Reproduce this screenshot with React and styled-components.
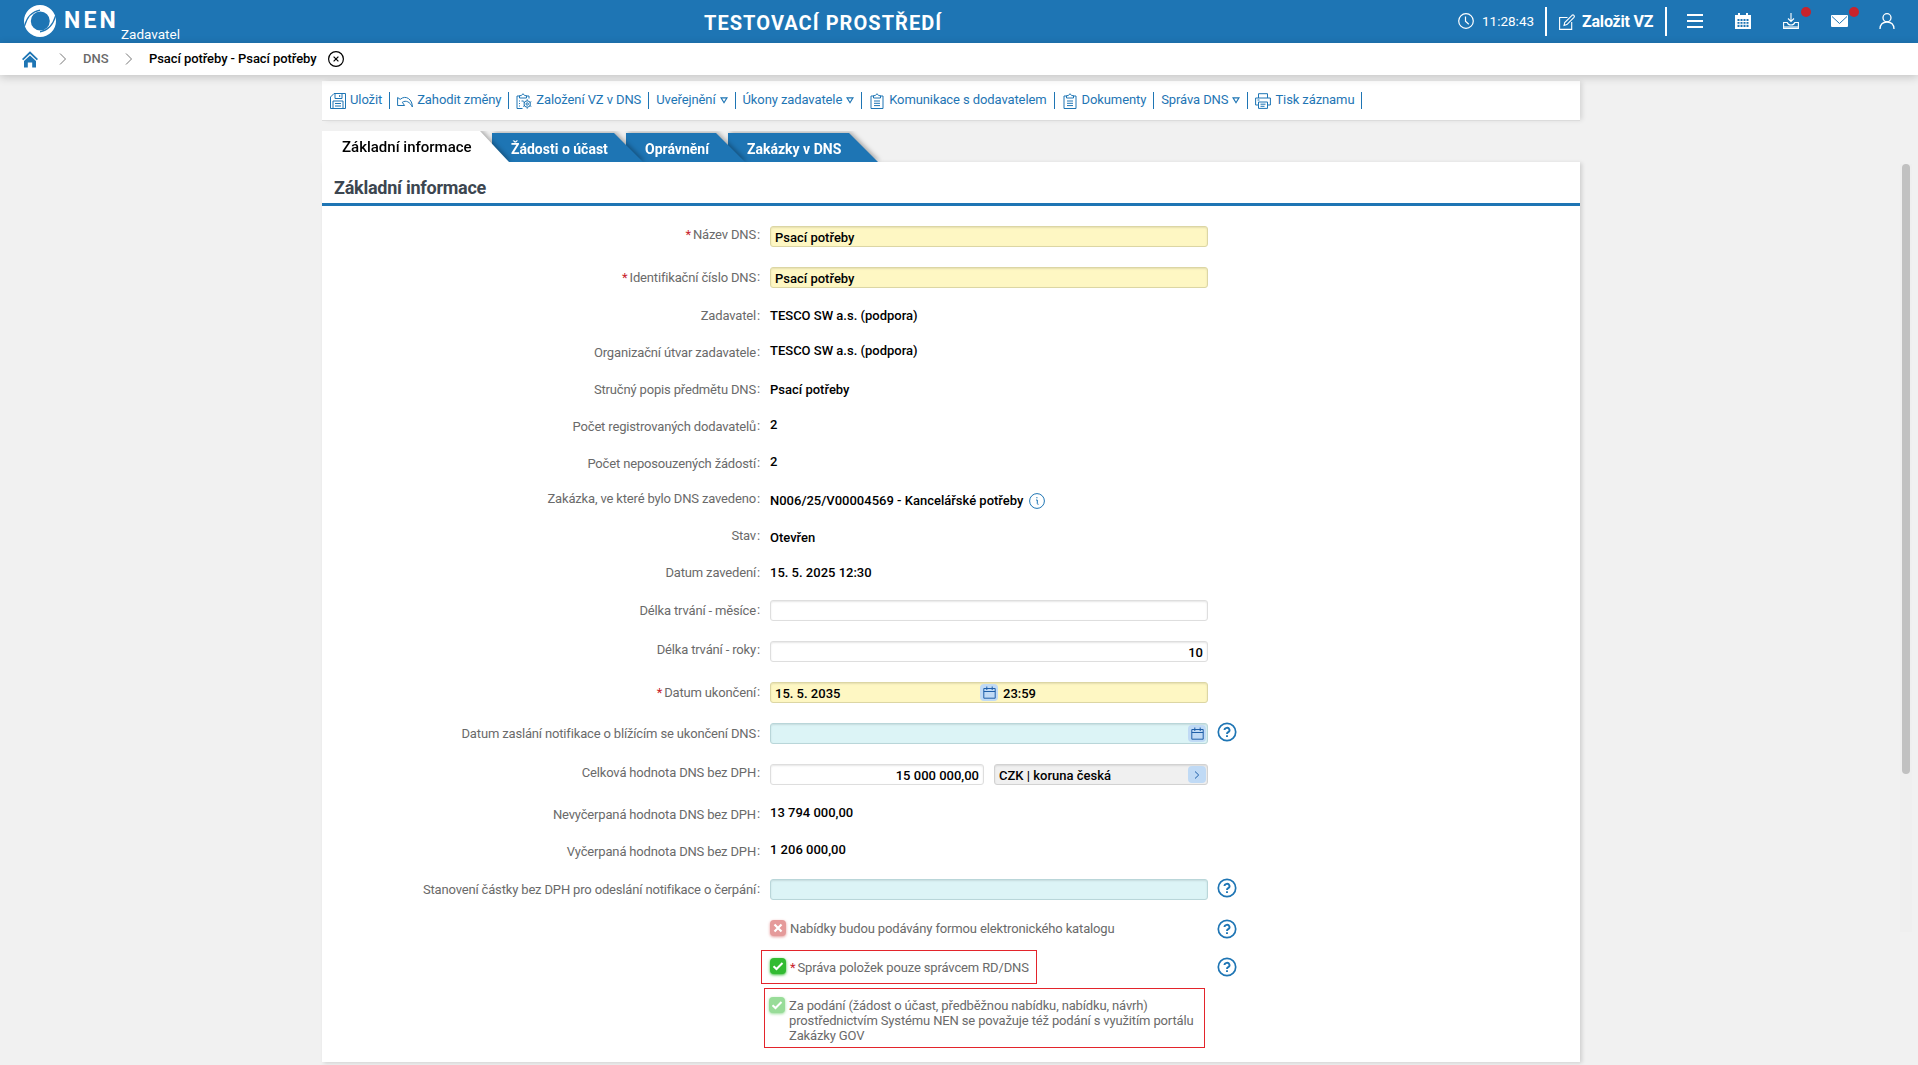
import React from 'react';
import styled, { createGlobalStyle } from 'styled-components';

const colors = {
    blue: '#1e75b4',
    page: '#f1f1f1',
    label: '#6a6a6a',
    red: '#c8232c',
    frame: '#e3242b',
}

const fieldColors = {
    required: { bg: '#fef7c3', line: '#dcd6a4' },
    notify: { bg: '#dcf4f6', line: '#b9d6d9' },
    plain: { bg: '#ffffff', line: '#dedede' },
    locked: { bg: '#f0f0f0', line: '#d2d2d2' },
}

// h = row height, l / v = top offset of the label and of the value
const rows = [
    { label: 'Název DNS', h: 41, l: 1, v: 2, required: true, kind: 'input', tone: 'required', value: 'Psací potřeby' },
    { label: 'Identifikační číslo DNS', h: 39, l: 3, v: 2, raised: true, required: true, kind: 'input', tone: 'required', value: 'Psací potřeby' },
    { label: 'Zadavatel', h: 37, l: 2, v: 2, value: 'TESCO SW a.s. (podpora)' },
    { label: 'Organizační útvar zadavatele', h: 37, l: 2, v: 0, raised: true, value: 'TESCO SW a.s. (podpora)' },
    { label: 'Stručný popis předmětu DNS', h: 37, l: 2, v: 2, raised: true, value: 'Psací potřeby' },
    { label: 'Počet registrovaných dodavatelů', h: 37, l: 2, v: 0, raised: true, value: '2' },
    { label: 'Počet neposouzených žádostí', h: 37, l: 2, v: 0, raised: true, value: '2' },
    { label: 'Zakázka, ve které bylo DNS zavedeno', h: 37, l: 0, v: 2, info: true, value: 'N006/25/V00004569 - Kancelářské potřeby' },
    { label: 'Stav', h: 37, l: 0, v: 2, value: 'Otevřen' },
    { label: 'Datum zavedení', h: 35, l: 0, v: 0, value: '15. 5. 2025 12:30' },
    { label: 'Délka trvání - měsíce', h: 41, l: 3, v: 2, raised: true, kind: 'input', tone: 'plain', value: '' },
    { label: 'Délka trvání - roky', h: 41, l: 1, v: 2, kind: 'input', tone: 'plain', align: 'right', value: '10' },
    { label: 'Datum ukončení', h: 41, l: 3, v: 2, raised: true, required: true, kind: 'datetime', tone: 'required', value: '15. 5. 2035', time: '23:59' },
    { label: 'Datum zaslání notifikace o blížícím se ukončení DNS', h: 41, l: 3, v: 2, raised: true, kind: 'date', tone: 'notify', help: true, value: '' },
    { label: 'Celková hodnota DNS bez DPH', h: 41, l: 1, v: 2, kind: 'money', tone: 'plain', value: '15 000 000,00', currency: 'CZK | koruna česká' },
    { label: 'Nevyčerpaná hodnota DNS bez DPH', h: 37, l: 2, v: 0, raised: true, value: '13 794 000,00' },
    { label: 'Vyčerpaná hodnota DNS bez DPH', h: 37, l: 2, v: 0, raised: true, value: '1 206 000,00' },
    { label: 'Stanovení částky bez DPH pro odeslání notifikace o čerpání', h: 41, l: 3, v: 2, raised: true, kind: 'input', tone: 'notify', help: true, value: '' },
]

const actions = [
    { text: 'Uložit', icon: 'save' },
    { text: 'Zahodit změny', icon: 'undo' },
    { text: 'Založení VZ v DNS', icon: 'clipGear' },
    { text: 'Uveřejnění', menu: true },
    { text: 'Úkony zadavatele', menu: true },
    { text: 'Komunikace s dodavatelem', icon: 'clip' },
    { text: 'Dokumenty', icon: 'clip' },
    { text: 'Správa DNS', menu: true },
    { text: 'Tisk záznamu', icon: 'print' },
]

const tabs = [
    { text: 'Žádosti o účast', width: 134 },
    { text: 'Oprávnění', width: 102 },
    { text: 'Zakázky v DNS', width: 133 },
]

const GlobalStyle = createGlobalStyle`
    * { box-sizing: border-box; }

    body {
        margin: 0;
        height: 1065px;
        overflow: hidden;
        background: ${colors.page};
        font-family: Roboto, sans-serif;
        font-size: 13px;
        color: #000;
    }

    svg { display: block; flex: none; }
`

/* ---------- icons ---------- */

const Stroke = ({ size = 16, w = 1, children, box = 16 }) => (
    <svg width={size} height={size} viewBox={`0 0 ${box} ${box}`} fill="none" stroke="currentColor" strokeWidth={w}>
        {children}
    </svg>
)

const LogoMark = () => (
    <svg width="32" height="32" viewBox="0 0 32 32">
        <path fill="#fff" fillRule="evenodd" d="M16 0a16 16 0 1 0 0 32a16 16 0 1 0 0-32zM16.300 6.500a9.500 9.500 0 1 1 0 19a9.500 9.500 0 1 1 0-19z" />
        <path fill="none" stroke={colors.blue} strokeWidth="1.2" d="M.5 21C3 12 8 6.500 16 5.200M31.500 11C29 20 24 25.500 16 26.800" />
    </svg>
)

const HomeIcon = () => (
    <svg width="16" height="17" viewBox="0 0 16 17">
        <path fill="none" stroke={colors.blue} strokeWidth="1.800" d="M.6 8.600L8 1.500L15.400 8.600" />
        <path fill={colors.blue} d="M8 4.400L14 10V16.500H10.200V11.500H5.800V16.500H2V10Z" />
    </svg>
)

const ClipBody = () => (
    <>
        <path d="M4.500 3H2v12.500h12V3h-2.500" />
        <path d="M4.500 5V2.600h1.800L8 .7l1.700 1.900h1.800V5z" />
    </>
)

const icons = {
    save: (
        <Stroke>
            <path d="M4 .5h11.500v15H.5V4zM5 .8v4.700h7V.8M9.700 2v2M3 15.300V8h10v7.300M5 10.500h6M5 13h6" />
        </Stroke>
    ),
    undo: (
        <Stroke>
            <path d="M.6 4.500v8h7L5.300 9.300C9 6.800 13 9 15.400 14C15.400 6.500 9 1.500 3.200 6.300z" />
        </Stroke>
    ),
    clip: (
        <Stroke>
            <ClipBody />
            <path d="M5 8h6M5 10.300h6M5 12.600h6" />
        </Stroke>
    ),
    clipGear: (
        <Stroke>
            <path d="M3.500 3H1v12.500h5.500M10.500 3H13v2.500M3.500 5V2.600h1.800L7 .7l1.700 1.900h1.800V5z" />
            <path d="M3 8h1M5.500 8h2M3 10.500h1M3 13h1" />
            <circle cx="11.200" cy="11" r="3.200" />
            <circle cx="11.200" cy="11" r="1.200" />
            <path d="M11.200 6.300v1.500M11.200 14.200v1.500M7.100 8.700l1.400.8M13.900 12.600l1.400.8M7.100 13.400l1.400-.8M13.900 9.500l1.400-.8" />
        </Stroke>
    ),
    print: (
        <Stroke>
            <path d="M3.500 5V.7h9V5M3.500 12H.6V5h14.800v7h-2.900M3.500 9h9v6.400h-9zM5.500 11.200h5M5.500 13.300h4M2.500 7h2" />
        </Stroke>
    ),
}

const CalendarIcon = () => (
    <Stroke size={13} box={13} w={1}>
        <path d="M.8 2.500h11.400v9.700H.8zM.8 5.500h11.400M3.800 .5v3.500M9.200 .5v3.500" />
    </Stroke>
)

const HelpIcon = () => (
    <svg width="20" height="20" viewBox="0 0 20 20" fill="none" stroke={colors.blue}>
        <circle cx="10" cy="10" r="8.700" strokeWidth="1.700" />
        <path d="M7.500 8.100a2.500 2.300 0 1 1 3.700 2C10.200 10.600 10 11 10 12" strokeWidth="1.900" />
        <path d="M10 13.200v1.900" strokeWidth="1.900" />
    </svg>
)

/* ---------- page header ---------- */

const Header = styled.header`
    height: 43px;
    background: ${colors.blue};
    color: #fff;
    display: grid;
    grid-template-columns: 704px 1fr auto;
`

const Brand = styled.div`
    display: flex;
    align-items: flex-start;
    padding: 5px 0 0 24px;
`

const BrandName = styled.span`
    margin-left: 8px;
    font-size: 23px;
    line-height: 32px;
    font-weight: 700;
    letter-spacing: 3.2px;
`

const BrandRole = styled.span`
    margin: 21px 0 0 2px;
    font-size: 13.5px;
    line-height: 16px;
`

const Environment = styled.div`
    font-size: 20px;
    font-weight: 700;
    line-height: 46px;
    letter-spacing: 1.05px;
`

const HeaderTools = styled.div`
    display: flex;
    align-items: center;
    padding-right: 23px;
    height: 42px;
`

const Clock = styled.div`
    display: flex;
    align-items: center;
    gap: 8px;
    width: 87px;
    font-size: 13.5px;
`

const NewTender = styled.div`
    display: flex;
    align-items: center;
    gap: 7px;
    width: 122px;
    height: 29px;
    margin-top: 1px;
    padding-left: 12px;
    border-left: 2px solid #fff;
    border-right: 2px solid #fff;
    font-size: 16px;
    font-weight: 700;
    letter-spacing: -0.2px;
    white-space: nowrap;
`

const HeaderIcons = styled.div`
    display: flex;
    align-items: center;
    gap: 32px;
    margin-left: 20px;
`

const HeaderIcon = styled.div`
    position: relative;
    width: 16px;
    height: 16px;
`

const Dot = styled.i`
    position: absolute;
    right: -12px;
    top: -6px;
    width: 10px;
    height: 10px;
    border-radius: 50%;
    background: ${colors.red};
`

const Breadcrumbs = styled.nav`
    position: relative;
    z-index: 2;
    height: 32px;
    display: flex;
    align-items: center;
    padding-left: 22px;
    background: #fff;
    box-shadow: 0 2px 10px rgba(0, 0, 0, 0.2);
    font-weight: 500;
`

const Crumb = styled.span`
    color: ${props => (props.$current ? '#000' : colors.label)};
    width: ${props => props.$width}px;
    line-height: 32px;
    letter-spacing: ${props => (props.$current ? '-0.08px' : '0')};
`

const Chevron = styled.span`
    width: 8px;
    margin: 0 ${props => props.$after}px 0 ${props => props.$before}px;
    color: #777;
`

/* ---------- toolbar and tabs ---------- */

const Content = styled.main`
    width: 1258px;
    margin: 6px 0 0 322px;
`

const Toolbar = styled.div`
    height: 40px;
    display: flex;
    padding: 11px 0 0 1px;
    background: #fff;
    border-bottom: 1px solid #dcdcdc;
    box-shadow: 3px 0 5px -1px rgba(0, 0, 0, 0.12);
    color: ${colors.blue};
    letter-spacing: -0.1px;
`

const Action = styled.div`
    display: flex;
    align-items: flex-start;
    height: 17px;
    padding: 0 7px;
    border-right: 1px solid ${colors.blue};
    line-height: 15px;
    white-space: nowrap;

    svg { margin: 1px 4px 0 0; }
`

const MenuMark = styled.span`
    margin: 5px 0 0 4px;

    svg { margin: 0; }
`

const Tabs = styled.div`
    display: flex;
    align-items: flex-end;
    height: 31px;
    margin-top: 10px;
    padding-right: 100px;
    overflow: hidden;
`

const TabWrap = styled.div`
    position: relative;
    z-index: ${props => props.$order};
    width: ${props => props.$width}px;
    flex: none;
    filter: drop-shadow(2px -1px 2px rgba(0, 0, 0, 0.28));
`

const TabShape = styled.div`
    width: ${props => props.$width + 17}px;
    height: ${props => (props.$active ? 31 : 29)}px;
    padding-left: ${props => (props.$active ? 20 : 19)}px;
    clip-path: polygon(0 0, calc(100% - 29px) 0, 100% 100%, 0 100%);
    background: ${props => (props.$active ? '#fff' : colors.blue)};
    color: ${props => (props.$active ? '#000' : '#fff')};
    font-size: ${props => (props.$active ? 15 : 14)}px;
    font-weight: ${props => (props.$active ? 500 : 700)};
    line-height: 32px;
    white-space: nowrap;
`

const Panel = styled.section`
    height: 900px;
    background: #fff;
    box-shadow: 2px 1px 4px rgba(0, 0, 0, 0.14);
`

const PanelTitle = styled.h1`
    margin: 0;
    height: 44px;
    padding-left: 12px;
    border-bottom: 3px solid ${colors.blue};
    color: #3c4650;
    font-size: 18px;
    font-weight: 700;
    line-height: 51px;
    letter-spacing: -0.25px;
`

/* ---------- form ---------- */

const Form = styled.div`
    padding-top: 18px;
`

const Row = styled.div`
    display: grid;
    grid-template-columns: 438px 438px 20px;
    column-gap: 10px;
    height: ${props => props.$h}px;
    line-height: 20px;
    white-space: nowrap;
`

const Label = styled.label`
    padding-top: ${props => props.$top}px;
    text-align: right;
    color: ${colors.label};
    letter-spacing: -0.16px;
`

const Star = styled.span`
    margin-right: 2px;
    color: ${colors.red};
`

const Colon = styled.span`
    position: relative;
    top: ${props => (props.$raised ? -1 : 0)}px;
    margin-left: 1px;
`

const Value = styled.div`
    display: flex;
    align-items: flex-start;
    gap: ${props => props.$gap || 5}px;
    padding-top: ${props => props.$top}px;
    font-weight: 500;
`

const Field = styled.div`
    flex: 1;
    display: flex;
    align-items: center;
    justify-content: ${props => (props.$align === 'right' ? 'flex-end' : 'flex-start')};
    height: 21px;
    padding: 2px 4px 0;
    border: 1px solid ${props => fieldColors[props.$tone].line};
    border-radius: 3px;
    background: ${props => fieldColors[props.$tone].bg};
    box-shadow: inset 0 1px 2px rgba(0, 0, 0, 0.1);
`

const FieldText = styled.span`
    width: ${props => (props.$width ? props.$width + 'px' : 'auto')};
`

const FieldButton = styled.span`
    display: flex;
    align-items: center;
    justify-content: center;
    width: 18px;
    height: 17px;
    margin: -2px ${props => (props.$end ? '-3px' : '5px')} 0 ${props => (props.$end ? 'auto' : '0')};
    border-radius: 4px;
    background: #c0daf5;
    color: #1f5fa8;
`

const InfoMark = styled.span`
    margin-top: 2px;
    color: ${colors.blue};
`

const Help = styled.div`
    margin-left: -1px;
    padding-top: ${props => props.$top}px;
`

const CheckRow = styled.div`
    display: grid;
    grid-template-columns: 448px 438px 30px;
    height: ${props => props.$h}px;
    white-space: nowrap;
`

const CheckCell = styled.div`
    grid-column: 2;
    padding: 2px 0 0;
`

const CheckLine = styled.div`
    display: flex;
    gap: 4px;
    color: ${colors.label};
    line-height: 15px;
    letter-spacing: -0.14px;
`

const HelpCell = styled.div`
    padding: ${props => props.$top}px 0 0 9px;
`

const Frame = styled.div`
    width: ${props => props.$width}px;
    height: ${props => props.$height}px;
    margin: ${props => props.$margin};
    padding: ${props => props.$pad};
    border: 1px solid ${colors.frame};
`

const Box = styled.span`
    flex: none;
    display: flex;
    align-items: center;
    justify-content: center;
    width: 16px;
    height: 16px;
    border-radius: 4px;
    background: ${props => props.$color};
    box-shadow: 0 1px 3px ${props => props.$color};
    color: #fff;
`

const CheckText = styled.span`
    padding-top: ${props => props.$top}px;
`

const ScrollTrack = styled.div`
    position: absolute;
    right: 6px;
    top: 164px;
    width: 12px;
    height: 768px;
    padding: 0 2px;
    background: #efefef;
`

const ScrollThumb = styled.div`
    height: 610px;
    border-radius: 4px;
    background: #c1c1c1;
`

const Check = () => (
    <Stroke size={12} box={12} w={2}><path d="M1.500 6.200L4.500 9L10.500 3" /></Stroke>
)

const Cross = () => (
    <Stroke size={10} box={10} w={2.2}><path d="M1.500 1.500L8.500 8.500M8.500 1.500L1.500 8.500" /></Stroke>
)

const Arrow = () => (
    <svg width="8" height="12" viewBox="0 0 8 12" fill="none" stroke="currentColor"><path d="M1 .5L6.500 6L1 11.500" /></svg>
)

const FormValue = ({ row }) => {
    if (row.kind === 'input') {
        return <Field $tone={row.tone} $align={row.align}>{row.value}</Field>
    }
    if (row.kind === 'datetime') {
        return (
            <Field $tone={row.tone}>
                <FieldText $width={205}>{row.value}</FieldText>
                <FieldButton><CalendarIcon /></FieldButton>
                <FieldText>{row.time}</FieldText>
            </Field>
        )
    }
    if (row.kind === 'date') {
        return <Field $tone={row.tone}><FieldButton $end><CalendarIcon /></FieldButton></Field>
    }
    if (row.kind === 'money') {
        return (
            <>
                <Field $tone="plain" $align="right">{row.value}</Field>
                <Field $tone="locked">
                    {row.currency}
                    <FieldButton $end>
                        <svg width="6" height="8" viewBox="0 0 6 8" fill="none" stroke="currentColor"><path d="M1 .5L4.700 4L1 7.500" /></svg>
                    </FieldButton>
                </Field>
            </>
        )
    }
    return (
        <>
            {row.value}
            {row.info && (
                <InfoMark>
                    <Stroke><circle cx="8" cy="8" r="7.400" /><path d="M7 7h1.300v3.500q0 1 1.200.8M7.900 4v1.300" /></Stroke>
                </InfoMark>
            )}
        </>
    )
}

const App = () => {
    return (
        <>
            <GlobalStyle />
            <Header>
                <Brand>
                    <LogoMark />
                    <BrandName>NEN</BrandName>
                    <BrandRole>Zadavatel</BrandRole>
                </Brand>
                <Environment>TESTOVACÍ PROSTŘEDÍ</Environment>
                <HeaderTools>
                    <Clock>
                        <Stroke w={1.2}><circle cx="8" cy="8" r="7.300" /><path d="M7.500 3.500V8.300L10.800 11.300" /></Stroke>
                        11:28:43
                    </Clock>
                    <NewTender>
                        <Stroke w={1.1}>
                            <path d="M8.500 3.500H.6v11.900h12.100V8" />
                            <path d="M5 11.500l.7-3L13 1.300q1-.8 1.900 0t.1 2L7.900 10.600z" />
                        </Stroke>
                        Založit VZ
                    </NewTender>
                    <HeaderIcons>
                        <HeaderIcon>
                            <Stroke w={2}><path d="M0 2h16M0 8h16M0 14h16" /></Stroke>
                        </HeaderIcon>
                        <HeaderIcon>
                            <svg width="16" height="16" viewBox="0 0 16 16" fill="#fff">
                                <path fillRule="evenodd" d="M0 2h3V0h2v2h6V0h2v2h3v14H0zM2.500 6v8h11V6z" />
                                <path fill="none" stroke="#fff" d="M5 6v8M8 6v8M11 6v8M2 8.500h12M2 11.300h12" />
                            </svg>
                        </HeaderIcon>
                        <HeaderIcon>
                            <Stroke w={1.1}>
                                <path d="M8 0v8M5 5.500l3 3l3-3M.6 9.500h3.600Q5 12 8 12t3.800-2.500h3.600v5.900H.6z" />
                                <path d="M1 14h14" />
                            </Stroke>
                            <Dot />
                        </HeaderIcon>
                        <HeaderIcon>
                            <svg width="17" height="16" viewBox="0 0 17 16">
                                <rect y="2" width="17" height="12" rx="1" fill="#fff" />
                                <path d="M1 3.500L8.500 10.500L16 3.500" fill="none" stroke={colors.blue} />
                            </svg>
                            <Dot />
                        </HeaderIcon>
                        <HeaderIcon>
                            <Stroke w={1.3}><circle cx="8" cy="4.700" r="4" /><path d="M1 16Q1.300 9 8 9t7 7" /></Stroke>
                        </HeaderIcon>
                    </HeaderIcons>
                </HeaderTools>
            </Header>

            <Breadcrumbs>
                <HomeIcon />
                <Chevron $before={21} $after={16}><Arrow /></Chevron>
                <Crumb $width={25}>DNS</Crumb>
                <Chevron $before={17} $after={16}><Arrow /></Chevron>
                <Crumb $current $width={179}>Psací potřeby - Psací potřeby</Crumb>
                <Stroke w={1.2}><circle cx="8" cy="8" r="7.400" /><path d="M5.600 5.600l4.800 4.800M10.400 5.600l-4.800 4.800" /></Stroke>
            </Breadcrumbs>

            <Content>
                <Toolbar>
                    {actions.map(action => (
                        <Action key={action.text}>
                            {action.icon && icons[action.icon]}
                            {action.text}
                            {action.menu && (
                                <MenuMark>
                                    <svg width="8" height="7" viewBox="0 0 8 7" fill="none" stroke="currentColor" strokeWidth="1.200"><path d="M1 .8h6L4 5.700z" /></svg>
                                </MenuMark>
                            )}
                        </Action>
                    ))}
                </Toolbar>

                <Tabs>
                    <TabWrap $width={170} $order={4}>
                        <TabShape $active $width={170}>Základní informace</TabShape>
                    </TabWrap>
                    {tabs.map((tab, i) => (
                        <TabWrap key={tab.text} $width={tab.width} $order={3 - i}>
                            <TabShape $width={tab.width}>{tab.text}</TabShape>
                        </TabWrap>
                    ))}
                </Tabs>

                <Panel>
                    <PanelTitle>Základní informace</PanelTitle>
                    <Form>
                        {rows.map(row => (
                            <Row key={row.label} $h={row.h}>
                                <Label $top={row.l}>
                                    {row.required && <Star>*</Star>}
                                    {row.label}
                                    <Colon $raised={row.raised}>:</Colon>
                                </Label>
                                <Value $top={row.v} $gap={row.kind === 'money' ? 10 : 6}><FormValue row={row} /></Value>
                                {row.help && <Help $top={1}><HelpIcon /></Help>}
                            </Row>
                        ))}
                        <CheckRow $h={32}>
                            <CheckCell>
                                <CheckLine>
                                    <Box $color="#e59a9a"><Cross /></Box>
                                    <CheckText $top={1}>Nabídky budou podávány formou elektronického katalogu</CheckText>
                                </CheckLine>
                            </CheckCell>
                            <HelpCell $top={1}><HelpIcon /></HelpCell>
                        </CheckRow>
                        <CheckRow $h={38}>
                            <CheckCell>
                                <Frame $width={276} $height={34} $margin="-2px 0 0 -9px" $pad="7px 0 0 8px">
                                    <CheckLine>
                                        <Box $color="#32bb32"><Check /></Box>
                                        <CheckText $top={2}><Star>*</Star>Správa položek pouze správcem RD/DNS</CheckText>
                                    </CheckLine>
                                </Frame>
                            </CheckCell>
                            <HelpCell $top={7}><HelpIcon /></HelpCell>
                        </CheckRow>
                        <CheckRow $h={60}>
                            <CheckCell>
                                <Frame $width={441} $height={60} $margin="-2px 0 0 -6px" $pad="8px 0 0 4px">
                                    <CheckLine>
                                        <Box $color="#98dc98"><Check /></Box>
                                        <CheckText $top={1}>
                                            Za podání (žádost o účast, předběžnou nabídku, nabídku, návrh)<br />
                                            prostřednictvím Systému NEN se považuje též podání s využitím portálu<br />
                                            Zakázky GOV
                                        </CheckText>
                                    </CheckLine>
                                </Frame>
                            </CheckCell>
                        </CheckRow>
                    </Form>
                </Panel>
            </Content>
            <ScrollTrack><ScrollThumb /></ScrollTrack>
        </>
    )
}

export default App
